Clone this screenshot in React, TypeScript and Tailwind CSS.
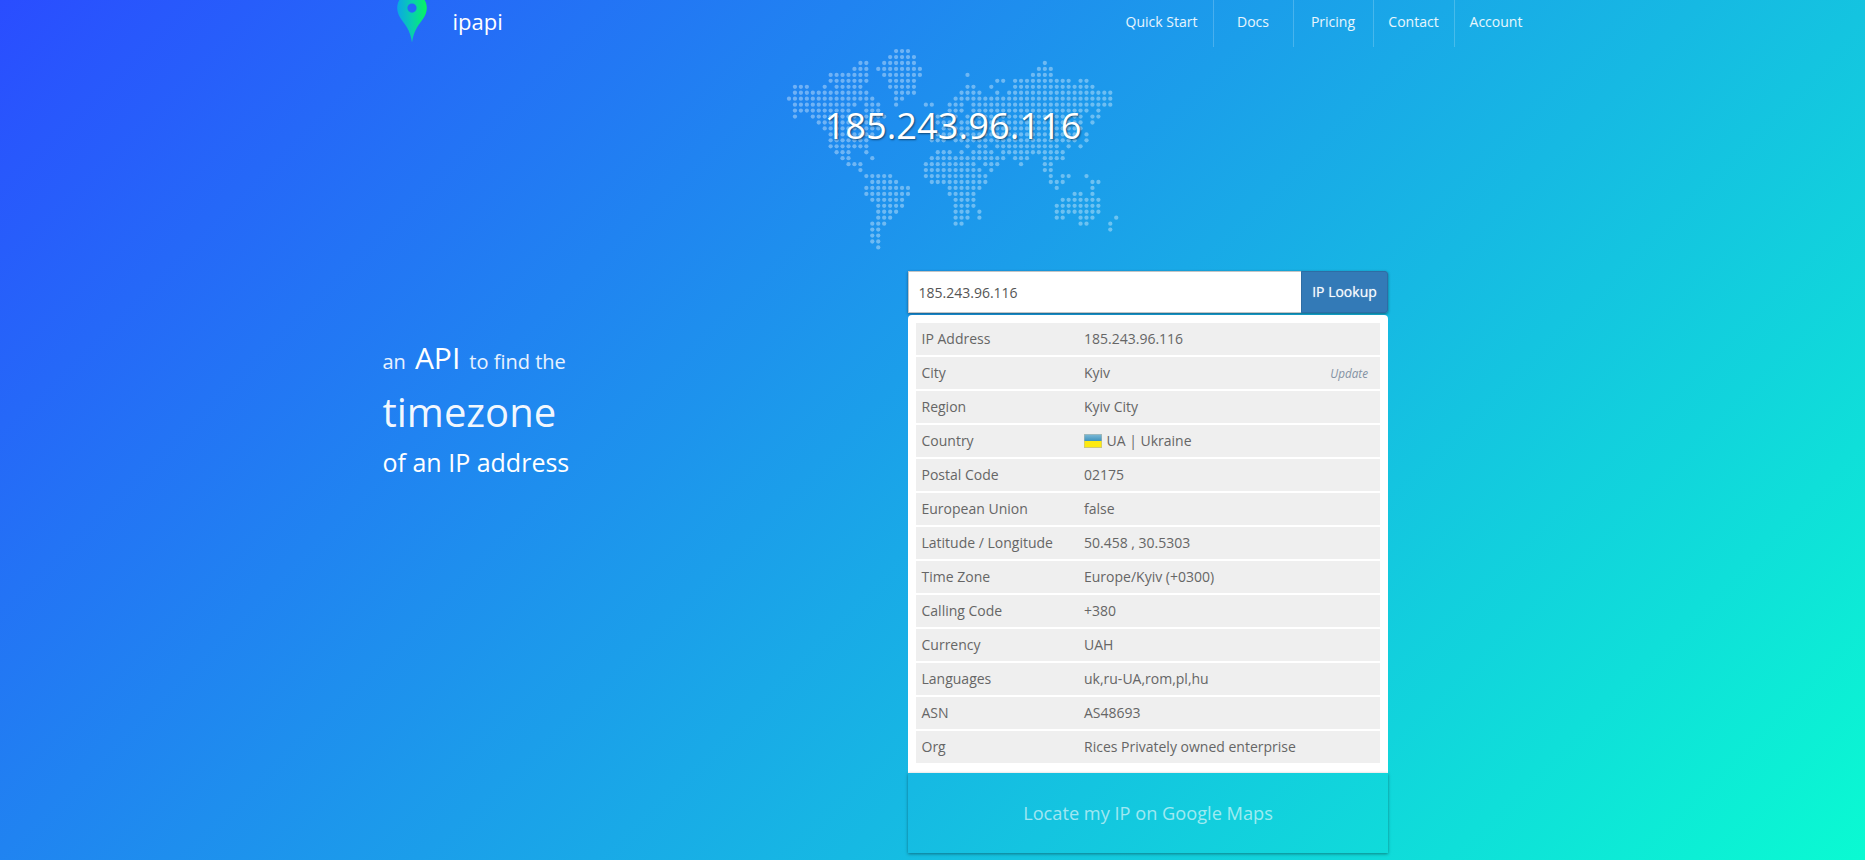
import React from "react";

type Span = [number, number];

const PITCH = 5.95;

const MAP_ROWS: Span[][] = [
  [[18, 20]],
  [[17, 21]],
  [[12, 13], [16, 21], [43, 43]],
  [[11, 13], [15, 22], [42, 44]],
  [[7, 13], [16, 22], [30, 30], [41, 44]],
  [[7, 13], [17, 21], [35, 36], [38, 47], [49, 50]],
  [[1, 3], [6, 6], [8, 12], [17, 21], [30, 31], [34, 34], [38, 51]],
  [[1, 13], [18, 21], [29, 32], [35, 35], [37, 54]],
  [[0, 14], [18, 19], [28, 54]],
  [[1, 11], [13, 15], [18, 18], [23, 24], [27, 29], [31, 54]],
  [[1, 10], [13, 15], [27, 29], [31, 50], [52, 52]],
  [[1, 1], [4, 11], [13, 16], [25, 26], [28, 28], [30, 49], [51, 52]],
  [[5, 15], [25, 27], [29, 49], [51, 51]],
  [[6, 15], [26, 49]],
  [[7, 14], [25, 48], [50, 50]],
  [[7, 13], [24, 26], [28, 48], [50, 50]],
  [[7, 13], [30, 30], [32, 33], [35, 45], [47, 47], [49, 49]],
  [[8, 10], [13, 13], [25, 27], [29, 29], [31, 34], [36, 46]],
  [[9, 10], [14, 14], [24, 36], [38, 40], [43, 46]],
  [[10, 12], [23, 31], [33, 35], [39, 39], [43, 44]],
  [[12, 12], [23, 32], [34, 34], [43, 44]],
  [[13, 17], [23, 33], [44, 44], [46, 47], [50, 50]],
  [[14, 18], [24, 33], [44, 46], [51, 52]],
  [[13, 20], [27, 32], [45, 45], [51, 51]],
  [[13, 20], [27, 31], [48, 49], [51, 51]],
  [[14, 19], [28, 31], [46, 52]],
  [[15, 19], [28, 31], [45, 52]],
  [[15, 18], [28, 30], [32, 32], [45, 52]],
  [[15, 17], [28, 30], [32, 32], [45, 46], [49, 51], [55, 55]],
  [[14, 16], [28, 29], [49, 50], [54, 54]],
  [[14, 15], [54, 54]],
  [[14, 15]],
  [[14, 15]],
  [[15, 15]],
];

function WorldMap() {
  return (
    <svg width="334" height="202" viewBox="0 0 334 202" className="block" aria-hidden="true">
      <g fill="#ffffff" fillOpacity="0.36">
        {MAP_ROWS.flatMap((spans, row) =>
          spans.flatMap(([from, to]) =>
            Array.from({ length: to - from + 1 }, (_, i) => (
              <circle
                key={`${row}-${from + i}`}
                cx={3 + (from + i) * PITCH}
                cy={3.1 + row * PITCH}
                r="2.15"
              />
            )),
          ),
        )}
      </g>
    </svg>
  );
}

function PinLogo() {
  return (
    <svg width="30" height="43" viewBox="0 0 30 43" className="block" aria-hidden="true">
      <defs>
        <linearGradient id="pin" x1="0" y1="0" x2="1" y2="0">
          <stop offset="0" stopColor="#0ba6e6" />
          <stop offset="0.5" stopColor="#08cfae" />
          <stop offset="1" stopColor="#06f562" />
        </linearGradient>
      </defs>
      <path
        fill="url(#pin)"
        fillRule="evenodd"
        d="M15 -7C6.500 -7 0.200 -0.500 0.200 8C0.200 16 6 21 10 27.500C12.500 31.700 14 36 15 42.500C16 36 17.500 31.700 20 27.500C24 21 29.800 16 29.800 8C29.800 -0.500 23.500 -7 15 -7ZM15 3.500A4.600 4.600 0 1 1 15 12.700A4.600 4.600 0 1 1 15 3.500Z"
      />
    </svg>
  );
}

function Flag() {
  return (
    <svg width="18" height="14" viewBox="0 0 18 14" className="mr-[4.500px] block" aria-hidden="true">
      <defs>
        <linearGradient id="flag-blue" x1="0" y1="0" x2="0" y2="1">
          <stop offset="0" stopColor="#7cb9d6" />
          <stop offset="1" stopColor="#3f93bd" />
        </linearGradient>
      </defs>
      <rect width="18" height="14" fill="#b9b9a8" />
      <rect x="0.500" y="0.500" width="17" height="6.500" fill="url(#flag-blue)" />
      <rect x="0.500" y="7" width="17" height="6.300" fill="#fdea12" />
    </svg>
  );
}

const NAV = [
  { label: "Quick Start", box: "w-[103px] border-r" },
  { label: "Docs", box: "w-[80px] border-r" },
  { label: "Pricing", box: "w-[80px] border-r" },
  { label: "Contact", box: "w-[81px] border-r" },
  { label: "Account", box: "w-[83px]" },
];

const ROWS: { label: string; value: string; flag?: boolean; update?: boolean }[] = [
  { label: "IP Address", value: "185.243.96.116" },
  { label: "City", value: "Kyiv", update: true },
  { label: "Region", value: "Kyiv City" },
  { label: "Country", value: "UA | Ukraine", flag: true },
  { label: "Postal Code", value: "02175" },
  { label: "European Union", value: "false" },
  { label: "Latitude / Longitude", value: "50.458 , 30.5303" },
  { label: "Time Zone", value: "Europe/Kyiv (+0300)" },
  { label: "Calling Code", value: "+380" },
  { label: "Currency", value: "UAH" },
  { label: "Languages", value: "uk,ru-UA,rom,pl,hu" },
  { label: "ASN", value: "AS48693" },
  { label: "Org", value: "Rices Privately owned enterprise" },
];

function Header() {
  return (
    <header className="flex h-[47px] w-[1141px] justify-between">
      <a className="flex">
        <PinLogo />
        <span className="ml-[25.500px] text-[22px] leading-[42px] text-white">ipapi</span>
      </a>
      <nav className="flex">
        {NAV.map((item) => (
          <a
            key={item.label}
            className={`${item.box} flex h-[47px] justify-center border-white/20 pr-px pt-3 text-sm leading-5 text-white/90`}
          >
            {item.label}
          </a>
        ))}
      </nav>
    </header>
  );
}

function Lookup() {
  return (
    <section className="w-[480px]">
      <form className="flex h-[42px] rounded-r-[3px] shadow-[0_1px_3px_rgba(0,0,0,0.45)]">
        <div className="flex w-[393px] items-center border border-r-0 border-[#c4c4c4] bg-white pl-[9.500px] pt-px text-sm text-[#555555]">
          185.243.96.116
        </div>
        <button
          type="button"
          className="flex w-[87px] items-center justify-center rounded-r-[3px] border border-[#2e6da4] bg-[#337ab7] text-sm font-medium text-white/95 [text-shadow:0_0_1px_rgba(255,255,255,0.7)]"
        >
          IP Lookup
        </button>
      </form>
      <div className="mt-[2px] flex h-[458px] flex-col gap-[2px] rounded-t-[4px] bg-white px-2 pt-2">
        {ROWS.map((row) => (
          <div
            key={row.label}
            className="flex h-8 items-center bg-[#efefef] pl-[5.500px] pr-3 text-sm leading-5 text-[#666666]"
          >
            <div className="w-[162.500px]">{row.label}</div>
            <div className="flex flex-1 items-center">
              {row.flag && <Flag />}
              {row.value}
            </div>
            {row.update && <a className="text-[11.700px] italic text-[#8492a3]">Update</a>}
          </div>
        ))}
      </div>
      <a className="flex h-[80px] items-center justify-center pt-px text-[18.200px] text-white/60 shadow-[0_1px_3px_rgba(0,0,0,0.4)]">
        Locate my IP on Google Maps
      </a>
    </section>
  );
}

export default function App() {
  return (
    <div className="h-[860px] overflow-hidden bg-[linear-gradient(135deg,#2a4dff_0%,#0afad2_100%)] pl-[382px] font-['Open_Sans',sans-serif]">
      <div className="pl-[15px]">
        <Header />
      </div>
      <div className="relative ml-[404px] h-[224px] w-[334px] pt-px">
        <WorldMap />
        <h1 className="absolute inset-x-0 top-[53px] text-center text-[36.300px] leading-[50px] text-white [text-shadow:1px_1px_2px_rgba(0,0,0,0.5)]">
          185.243.96.116
        </h1>
      </div>
      <main className="flex">
        <section className="w-[526px] pl-[0.500px] pt-[67px] text-white">
          <div className="flex items-baseline leading-[40px]">
            <span className="text-[20px] text-white/90">an</span>
            <span className="ml-[9px] text-[30px]">API</span>
            <span className="ml-[9px] text-[20px] text-white/90">to find the</span>
          </div>
          <div className="mt-[2px] text-[40px] leading-[56px] text-white/95">timezone</div>
          <div className="mt-[4px] text-[25px] leading-[36px]">of an IP address</div>
        </section>
        <Lookup />
      </main>
    </div>
  );
}
